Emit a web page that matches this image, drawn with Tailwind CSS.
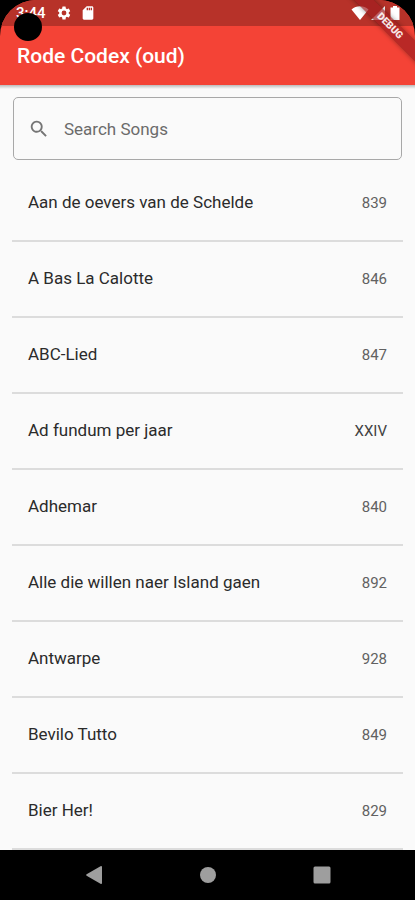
<!DOCTYPE html>
<html lang="nl" class="bg-black">
<head>
  <meta charset="UTF-8" />
  <meta name="viewport" content="width=device-width, initial-scale=1" />
  <title>Rode Codex (oud)</title>
  <script src="https://cdn.jsdelivr.net/npm/@tailwindcss/browser@4"></script>
</head>

<body class="relative flex min-h-screen flex-col overflow-x-hidden bg-black font-[Roboto,sans-serif] text-[#2b2b2b]">

  <!-- HEADER -->
  <header class="relative z-10 bg-[#f44336] rounded-t-[36px] overflow-hidden">
    <!-- status bar -->
    <div class="flex h-[26px] items-center justify-between bg-[#b73229] pl-4 pr-3 text-white">
      <div class="flex items-center gap-2">
        <span class="w-8 text-[15px] leading-5 font-medium">3:44</span>
        <svg class="size-4" viewBox="0 0 24 24" fill="currentColor"><path d="M19.14 12.94c.04-.3.06-.61.06-.94s-.02-.64-.07-.94l2.03-1.58a.49.49 0 0 0 .12-.61l-1.92-3.32a.49.49 0 0 0-.59-.22l-2.39.96a7 7 0 0 0-1.62-.94l-.36-2.54A.48.48 0 0 0 13.92 2.4h-3.84a.48.48 0 0 0-.48.41l-.36 2.54c-.59.24-1.13.57-1.62.94l-2.39-.96a.48.48 0 0 0-.59.22L2.74 8.87a.48.48 0 0 0 .12.61l2.03 1.58c-.05.3-.09.63-.09.94s.02.64.07.94l-2.03 1.58a.49.49 0 0 0-.12.61l1.92 3.32c.12.22.37.29.59.22l2.39-.96c.5.38 1.03.7 1.62.94l.36 2.54c.05.24.24.41.48.41h3.84c.24 0 .44-.17.47-.41l.36-2.54a7 7 0 0 0 1.62-.94l2.39.96c.22.08.47 0 .59-.22l1.92-3.32a.48.48 0 0 0-.12-.61zM12 15.600a3.600 3.600 0 1 1 0-7.200 3.600 3.600 0 0 1 0 7.200z"/></svg>
        <svg class="size-4" viewBox="0 0 24 24" fill="currentColor"><path d="M18 2h-8L4 8v12c0 1.100.9 2 2 2h12c1.100 0 2-.9 2-2V4c0-1.100-.9-2-2-2zm-6 6h-2V4h2zm3 0h-2V4h2zm3 0h-2V4h2z"/></svg>
      </div>
      <div class="flex items-center gap-px">
        <svg class="h-4 w-[18px]" viewBox="0 0 18 16" fill="currentColor"><path d="M9 15 .5 4.500C3 2.300 5.800 1.300 9 1.300s6 1 8.500 3.200z"/></svg>
        <svg class="size-4" viewBox="0 0 16 16" fill="currentColor"><path d="M1 15 15 1v14z"/></svg>
        <svg class="size-4" viewBox="0 0 16 16" fill="currentColor"><path d="M6 1h4v1.500h2.500V15h-9V2.500H6z"/></svg>
      </div>
    </div>
    <!-- app bar -->
    <div class="flex h-[59px] items-center px-[17px] pt-px">
      <h1 class="text-[21px] leading-7 font-medium text-white">Rode Codex (oud)</h1>
    </div>
    <!-- debug ribbon -->
    <div class="absolute -right-10 top-[19px] w-[130px] rotate-45 bg-[#a01d20]/70 text-center text-[10px] leading-[14px] font-black text-white/90 shadow-[0_0_5px_rgba(0,0,0,0.4)]">DEBUG</div>
  </header>

  <!-- camera hole -->
  <div class="absolute left-[14px] top-[13px] z-20 size-7 rounded-full bg-black"></div>

  <!-- CONTENT -->
  <main class="bg-[#fafafa]">
    <div class="h-1 bg-gradient-to-b from-black/25 to-transparent"></div>
    <label class="mx-[13px] mt-2 mb-[6px] flex h-[63px] items-center gap-[14px] rounded-[5px] border border-[#a8a8a8] px-[14px]">
      <svg class="size-[22px] shrink-0 text-[#757575]" viewBox="0 0 24 24" fill="currentColor"><path d="M15.500 14h-.79l-.28-.27A6.500 6.500 0 1 0 13.730 14.430l.27.28v.79l5 4.990L20.490 19zm-6 0a4.500 4.500 0 1 1 0-9 4.500 4.500 0 0 1 0 9z"/></svg>
      <input id="search" type="text" placeholder="Search Songs" aria-label="Search Songs" class="w-full text-[17px] leading-6 placeholder-[#6b6b6b] outline-none">
    </label>

    <ul class="px-3 text-[17px]">
      <li class="flex h-[76px] items-center justify-between border-b-2 border-[#dcdcdc] px-4"><span>Aan de oevers van de Schelde</span><span class="text-[15px] text-[#616161]">839</span></li>
      <li class="flex h-[76px] items-center justify-between border-b-2 border-[#dcdcdc] px-4"><span>A Bas La Calotte</span><span class="text-[15px] text-[#616161]">846</span></li>
      <li class="flex h-[76px] items-center justify-between border-b-2 border-[#dcdcdc] px-4"><span>ABC-Lied</span><span class="text-[15px] text-[#616161]">847</span></li>
      <li class="flex h-[76px] items-center justify-between border-b-2 border-[#dcdcdc] px-4"><span>Ad fundum per jaar</span><span class="text-[15px] text-[#424242]">XXIV</span></li>
      <li class="flex h-[76px] items-center justify-between border-b-2 border-[#dcdcdc] px-4"><span>Adhemar</span><span class="text-[15px] text-[#616161]">840</span></li>
      <li class="flex h-[76px] items-center justify-between border-b-2 border-[#dcdcdc] px-4"><span>Alle die willen naer Island gaen</span><span class="text-[15px] text-[#616161]">892</span></li>
      <li class="flex h-[76px] items-center justify-between border-b-2 border-[#dcdcdc] px-4"><span>Antwarpe</span><span class="text-[15px] text-[#616161]">928</span></li>
      <li class="flex h-[76px] items-center justify-between border-b-2 border-[#dcdcdc] px-4"><span>Bevilo Tutto</span><span class="text-[15px] text-[#616161]">849</span></li>
      <li class="flex h-[76px] items-center justify-between border-b-2 border-[#dcdcdc] px-4"><span>Bier Her!</span><span class="text-[15px] text-[#616161]">829</span></li>
    </ul>
  </main>

  <!-- NAVIGATION BAR -->
  <nav class="flex flex-1 items-center justify-center gap-[90px] bg-black text-[#9e9e9e]">
    <button aria-label="Back"><svg class="size-6" viewBox="0 0 24 24" fill="currentColor"><path d="M20 4v16a1 1 0 0 1-1.500.8L4.600 12.800a1 1 0 0 1 0-1.600L18.500 3.200A1 1 0 0 1 20 4z"/></svg></button>
    <button aria-label="Home"><svg class="size-6" viewBox="0 0 24 24" fill="currentColor"><circle cx="12" cy="12" r="8"/></svg></button>
    <button aria-label="Overview"><svg class="size-6" viewBox="0 0 24 24" fill="currentColor"><rect x="3.500" y="3.500" width="17" height="17" rx="1.500"/></svg></button>
  </nav>
</body>
</html>
